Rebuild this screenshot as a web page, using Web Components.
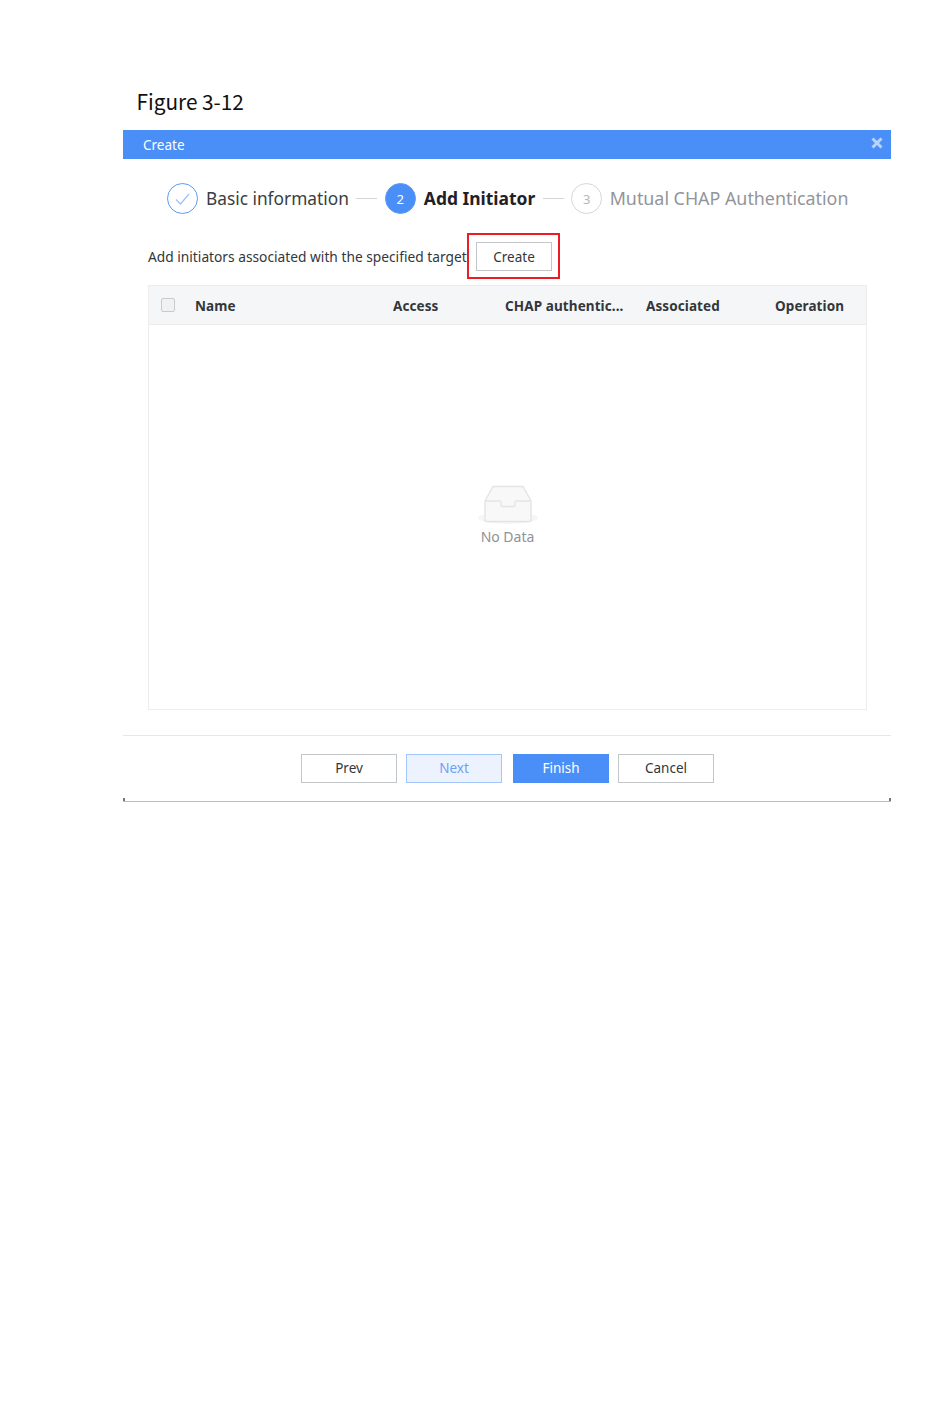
<!DOCTYPE html>
<html>
<head>
<meta charset="utf-8">
<title>Figure 3-12</title>
<style>
    html, body { margin: 0; background: #fff; }
    body { width: 950px; height: 1422px; overflow: hidden; font-family: "Noto Sans", "Liberation Sans", sans-serif; }
</style>
</head>
<body>

<figure-page caption="Figure 3-12">
    <create-dialog heading="Create">
        <step-bar>
            <step-item state="done" num="1">Basic information</step-item>
            <step-item state="active" num="2">Add Initiator</step-item>
            <step-item state="todo" num="3">Mutual CHAP Authentication</step-item>
        </step-bar>
        <tool-row label="Add initiators associated with the specified target">
            <ui-button width="76" height="29" marked>Create</ui-button>
        </tool-row>
        <initiator-table></initiator-table>
        <ui-button slot="footer" width="96" height="29">Prev</ui-button>
        <ui-button slot="footer" width="96" height="29" kind="light">Next</ui-button>
        <ui-button slot="footer" width="96" height="29" kind="primary">Finish</ui-button>
        <ui-button slot="footer" width="96" height="29">Cancel</ui-button>
    </create-dialog>
</figure-page>

<script>
    class FigurePage extends HTMLElement {
        constructor() {
            super();
            this.attachShadow({mode: 'open'}).innerHTML = `
      <style>
        :host { display: block; padding: 87px 59px 0 123px; }
        .caption {
          height: 43px;
          padding-left: 13.5px;
          font: 20.8px/28px "Noto Sans CJK SC", "Noto Sans", sans-serif;
          color: #111;
        }
      </style>
      <div class="caption">${this.getAttribute('caption')}</div>
      <slot></slot>
    `;
        }
    }

    class CreateDialog extends HTMLElement {
        constructor() {
            super();
            this.attachShadow({mode: 'open'}).innerHTML = `
      <style>
        :host { display: block; width: 768px; height: 672px; position: relative; box-sizing: border-box; border-bottom: 1px solid #b9bbbd; }
        :host::before, :host::after {
          content: ""; position: absolute; bottom: 0; width: 2px; height: 3px; background: #777;
        }
        :host::before { left: 0; }
        :host::after { right: 0; }
        header {
          height: 29px;
          background: #4a8ff8;
          color: #fff;
          display: flex;
          align-items: center;
          justify-content: space-between;
          padding: 0 8px 0 20px;
          font-size: 13.5px;
        }
        header svg { display: block; margin-top: -4px; }
        .body { height: 577px; padding: 24px 24px 0 25px; box-sizing: border-box; border-bottom: 1px solid #e6e7e8; }
        footer { display: flex; padding: 18px 0 0 178px; gap: 9px; }
        ::slotted(ui-button) { padding-bottom: 2px; }
      </style>
      <header>
        <span>${this.getAttribute('heading')}</span>
        <svg width="12" height="12" viewBox="0 0 12 12"><path d="M1.5 1.5l9 9M10.5 1.5l-9 9" stroke="#b9d3fb" stroke-width="3"/></svg>
      </header>
      <div class="body"><slot></slot></div>
      <footer><slot name="footer"></slot></footer>
    `;
        }
    }

    class StepBar extends HTMLElement {
        constructor() {
            super();
            this.attachShadow({mode: 'open'}).innerHTML = `
      <style>
        :host { display: flex; align-items: center; height: 31px; padding-left: 19px; }
      </style>
      <slot></slot>
    `;
        }
    }

    class StepItem extends HTMLElement {
        constructor() {
            super();
            const state = this.getAttribute('state');
            const num = this.getAttribute('num');
            const mark = state === 'done'
                ? `<svg width="15" height="12" viewBox="0 0 15 12"><path d="M1 6.5l4.5 4.5 8.5-10" fill="none" stroke="#9cc0f9" stroke-width="1.2"/></svg>`
                : num;
            this.attachShadow({mode: 'open'}).innerHTML = `
      <style>
        :host { display: flex; align-items: center; font-size: 17.3px; color: #3a3d42; }
        .circle {
          width: 31px; height: 31px; box-sizing: border-box;
          border-radius: 50%;
          border: 1.5px solid #5b9bf8;
          display: flex; align-items: center; justify-content: center;
          font-size: 13px;
        }
        .label { margin: 0 0 0 8px; white-space: nowrap; }
        .line { width: 21px; height: 1px; background: #d4d5d7; margin: 0 7.5px; }
        :host([state=active]) { color: #1f2126; font-weight: 700; font-size: 17.45px; }
        :host([state=active]) .label { margin-top: -2px; }
        :host([state=active]) .circle { background: #4a8ff8; color: #fff; font-weight: 400; }
        :host([state=todo]) { color: #92959b; font-size: 17.85px; }
        :host([state=todo]) .label { margin: -2px 0 0 7.4px; }
        :host([state=todo]) .circle { border-color: #d6d7d9; color: #b5b7ba; font-size: 13px; }
        :host([state=todo]) .line { display: none; }
      </style>
      <span class="circle">${mark}</span>
      <span class="label"><slot></slot></span>
      <span class="line"></span>
    `;
        }
    }

    class ToolRow extends HTMLElement {
        constructor() {
            super();
            this.attachShadow({mode: 'open'}).innerHTML = `
      <style>
        :host { display: flex; align-items: center; margin-top: 28px; height: 29px; font-size: 13.75px; color: #33363b; }
        .label { width: 328px; white-space: nowrap; }
      </style>
      <span class="label">${this.getAttribute('label')}</span>
      <slot></slot>
    `;
        }
    }

    class UiButton extends HTMLElement {
        constructor() {
            super();
            this.attachShadow({mode: 'open'}).innerHTML = `
      <style>
        :host {
          display: flex; align-items: center; justify-content: center;
          position: relative; box-sizing: border-box;
          width: ${this.getAttribute('width')}px;
          height: ${this.getAttribute('height')}px;
          border: 1px solid #c3c6c9;
          background: #fff;
          color: #33363b;
          font-size: 13.5px;
        }
        :host([kind=light]) { background: #edf3fe; border-color: #a3c6fa; color: #6e9ff7; }
        :host([kind=primary]) { background: #4a8ff8; border-color: #4a8ff8; color: #fff; margin-left: 2px; }
        :host([marked])::after {
          content: ""; position: absolute; inset: -10px -9px -9px -10px;
          border: 2px solid #ed1c24;
        }
      </style>
      <slot></slot>
    `;
        }
    }

    class InitiatorTable extends HTMLElement {
        constructor() {
            super();
            const cols = [
                ["Name", 198],
                ["Access", 112],
                ["CHAP authentic...", 141],
                ["Associated", 129],
                ["Operation", 80]
            ];
            const heads = cols.map(c => `<span style="width:${c[1]}px">${c[0]}</span>`).join('');
            this.attachShadow({mode: 'open'}).innerHTML = `
      <style>
        :host { display: block; margin-top: 14px; height: 425px; box-sizing: border-box; border: 1px solid #ececed; }
        .head {
          height: 38px; background: #f5f6f8; border-bottom: 1px solid #ececed;
          display: flex; align-items: center; padding-left: 12px;
          font-size: 13.5px; font-weight: 700; letter-spacing: .1px; color: #33363b; white-space: nowrap;
        }
        .check {
          width: 14px; height: 14px; box-sizing: border-box;
          border: 1px solid #c8cacc; border-radius: 2px; background: #f1f1f2;
          margin: 0 20px 0 0; flex: none;
        }
        .head span { display: block; flex: none; overflow: hidden; padding-top: 2px; }
        .empty {
          height: 385px; box-sizing: border-box; padding-top: 160px;
          display: flex; flex-direction: column; align-items: center;
          font-size: 14px; color: #8f9297;
        }
        .empty svg { display: block; }
        .empty div { margin-top: 2px; line-height: 19px; }
      </style>
      <div class="head"><i class="check"></i>${heads}</div>
      <div class="empty">
        <svg width="60" height="40" viewBox="0 0 60 40">
          <ellipse cx="30" cy="33" rx="30" ry="6" fill="#f6f6f6"/>
          <path d="M7 16L15 1.5h30L53 16v19a1.5 1.5 0 0 1-1.5 1.5h-43A1.5 1.5 0 0 1 7 35z" fill="#f8f8f8" stroke="#e4e4e5" stroke-width="1.4"/>
          <path d="M7 16h14.5c1 0 1.5 .5 1.5 1.5V20c0 1 .5 1.5 1.5 1.5h11c1 0 1.5-.5 1.5-1.5v-2.5c0-1 .5-1.5 1.5-1.5H53" fill="none" stroke="#e4e4e5" stroke-width="1.4"/>
        </svg>
        <div>No Data</div>
      </div>
    `;
        }
    }

    customElements.define('figure-page', FigurePage);
    customElements.define('create-dialog', CreateDialog);
    customElements.define('step-bar', StepBar);
    customElements.define('step-item', StepItem);
    customElements.define('tool-row', ToolRow);
    customElements.define('ui-button', UiButton);
    customElements.define('initiator-table', InitiatorTable);
</script>
</body>
</html>
